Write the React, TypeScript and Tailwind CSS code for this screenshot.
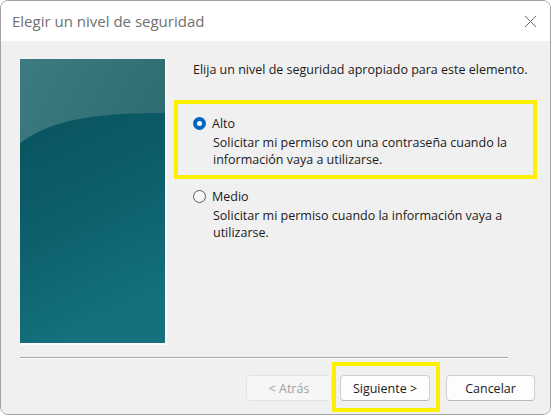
import React from 'react';

const font = { fontFamily: '"Open Sans", "Noto Sans", sans-serif' };

const Banner: React.FC = () => (
  <svg width="145" height="284" viewBox="0 0 145 284" className="block">
    <defs>
      <linearGradient id="top" x1="0" y1="0" x2="1" y2="1">
        <stop offset="0" stopColor="#3c7b7f" />
        <stop offset="1" stopColor="#27636a" />
      </linearGradient>
      <linearGradient id="low" x1="0" y1="0" x2="0.3" y2="1">
        <stop offset="0" stopColor="#09535e" />
        <stop offset="0.5" stopColor="#0c5f6b" />
        <stop offset="1" stopColor="#14717d" />
      </linearGradient>
    </defs>
    <rect width="145" height="284" fill="url(#top)" />
    <path d="M0,84 C35,58 85,54 145,54 L145,284 L0,284 Z" fill="url(#low)" />
  </svg>
);

const Radio: React.FC<{ checked?: boolean }> = ({ checked }) =>
  checked ? (
    <span className="w-[13px] h-[13px] rounded-full bg-[#0067c0] flex items-center justify-center shrink-0">
      <span className="w-[5px] h-[5px] rounded-full bg-white" />
    </span>
  ) : (
    <span className="w-[13px] h-[13px] rounded-full border border-[#5c5c5c] bg-[#f7f7f7] shrink-0" />
  );

interface OptionProps {
  label: string;
  lines: string[];
  checked?: boolean;
}

const Option: React.FC<OptionProps> = ({ label, lines, checked }) => (
  <div>
    <div className="flex items-center gap-[6px] h-[17px]">
      <Radio checked={checked} />
      <span>{label}</span>
    </div>
    <div className="pl-[20px] mt-[2px]">
      {lines.map((l) => (
        <div key={l}>{l}</div>
      ))}
    </div>
  </div>
);

export default function App() {
  return (
    <div className="w-[552px] h-[417px] bg-white" style={font}>
      <div className="w-[551px] h-[415px] border border-[#a3a3a3] rounded-[8px] overflow-hidden flex flex-col">
        <div className="h-[40px] bg-white flex items-center justify-between pl-[11px] pr-[13px] shrink-0">
          <span className="text-[15px] text-[#6f6f6f]">Elegir un nivel de seguridad</span>
          <svg width="13" height="13" viewBox="0 0 13 13">
            <path d="M1 1 L12 12 M12 1 L1 12" stroke="#6a6a6a" strokeWidth="1" />
          </svg>
        </div>

        <div className="flex-1 bg-[#f0f0f0] flex flex-col pl-[19px] pt-[18px] text-[12.5px] leading-[17px] text-[#1b1b1b]">
          <div className="flex">
            <div className="border-r-2 border-b-2 border-[#fbfbfb]">
              <Banner />
            </div>
            <div className="ml-[26px] pt-[2px] flex flex-col">
              <div>Elija un nivel de seguridad apropiado para este elemento.</div>

              <div className="relative mt-[37px]">
                <div className="absolute -left-[19px] -top-[15px] w-[363px] h-[79px] border-4 border-[#fbf000] pointer-events-none" />
                <Option
                  checked
                  label="Alto"
                  lines={[
                    'Solicitar mi permiso con una contraseña cuando la',
                    'información vaya a utilizarse.',
                  ]}
                />
              </div>

              <div className="mt-[20px]">
                <Option
                  label="Medio"
                  lines={['Solicitar mi permiso cuando la información vaya a', 'utilizarse.']}
                />
              </div>
            </div>
          </div>

          <div className="mt-[12px] w-[488px] h-[2px] border-t border-[#a8a8a8] border-b border-b-white" />

          <div className="flex justify-end pr-[15px] mt-[16px]">
            <button className="w-[86px] h-[26px] mr-[8px] rounded-[4px] border border-[#e3e3e3] bg-[#f6f6f6] text-[#a2a2a2]">
              &lt; Atrás
            </button>
            <div className="relative mr-[16px]">
              <div className="absolute -left-[8px] -top-[13px] w-[108px] h-[50px] border-4 border-[#fbf000] pointer-events-none" />
              <button className="w-[90px] h-[26px] rounded-[4px] border border-[#d0d0d0] border-b-[#b8b8b8] bg-[#fdfdfd] text-[#1b1b1b]">
                Siguiente &gt;
              </button>
            </div>
            <button className="w-[89px] h-[26px] rounded-[4px] border border-[#d0d0d0] border-b-[#b8b8b8] bg-[#fdfdfd] text-[#1b1b1b]">
              Cancelar
            </button>
          </div>
        </div>
      </div>
    </div>
  );
}
